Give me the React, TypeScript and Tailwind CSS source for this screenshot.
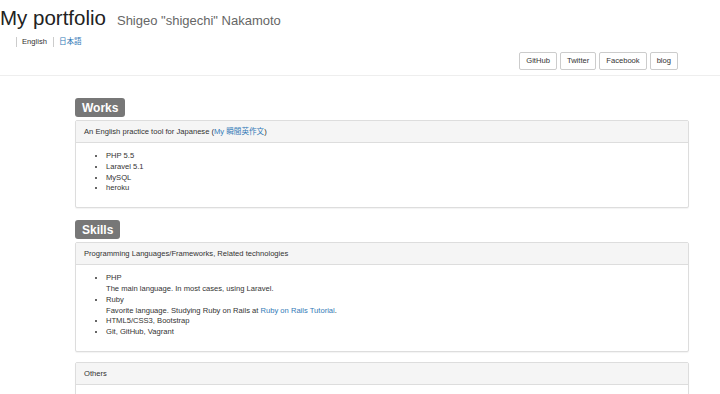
import React from "react";

function Panel({ title, children }: { title: React.ReactNode; children?: React.ReactNode }) {
  return (
    <div className="border border-[#dddddd] rounded-[2px] bg-white shadow-[0_1px_1px_rgba(0,0,0,0.05)]">
      <div className="bg-[#f5f5f5] border-b border-[#dddddd] h-[22px] px-[8px] flex items-center leading-[11px]">
        {title}
      </div>
      {children}
    </div>
  );
}

function Label({ children }: { children: React.ReactNode }) {
  return (
    <div className="inline-flex items-center h-[19px] px-[7px] bg-[#777777] rounded-[3px] text-white font-bold text-[12px] leading-none">
      {children}
    </div>
  );
}

export default function App() {
  const link = "text-[#337ab7]";
  return (
    <div
      className="w-[720px] h-[394px] overflow-hidden bg-white text-[#333333] text-[7.6px] leading-[10.8px]"
      style={{ fontFamily: '"Liberation Sans", Arial, "Noto Sans CJK JP", sans-serif' }}
    >
      <header className="border-b border-[#eeeeee] h-[76px] relative">
        <div className="flex items-baseline pt-[6px]">
          <h1 className="text-[20.5px] leading-[23px] font-normal text-[#222222] m-0">My portfolio</h1>
          <span className="ml-[11px] text-[13px] text-[#666666]">Shigeo "shigechi" Nakamoto</span>
        </div>
        <div className="flex items-center mt-[8px] ml-[16px]">
          <span className="border-l border-[#cccccc] pl-[5px] pr-[6px] leading-[10px]">English</span>
          <span className={`border-l border-[#cccccc] pl-[5px] leading-[10px] ${link}`}>日本語</span>
        </div>
        <div className="flex justify-end gap-[3px] mr-[42px] mt-[5px]">
          {["GitHub", "Twitter", "Facebook", "blog"].map((b) => (
            <span
              key={b}
              className="h-[18px] px-[6px] flex items-center border border-[#cccccc] rounded-[2px] bg-white text-[#333333]"
            >
              {b}
            </span>
          ))}
        </div>
      </header>

      <main className="ml-[75px] w-[614px] pt-[22px]">
        <Label>Works</Label>
        <div className="mt-[3px]">
          <Panel
            title={
              <span>
                An English practice tool for Japanese (<span className={link}>My 瞬間英作文</span>)
              </span>
            }
          >
            <div className="px-[8px] pt-[8px] pb-[8px]">
              <ul className="list-disc pl-[22px] mb-[5px]">
                <li>PHP 5.5</li>
                <li>Laravel 5.1</li>
                <li>MySQL</li>
                <li>heroku</li>
              </ul>
            </div>
          </Panel>
        </div>

        <div className="mt-[12px]">
          <Label>Skills</Label>
        </div>
        <div className="mt-[3px]">
          <Panel title="Programming Languages/Frameworks, Related technologies">
            <div className="px-[8px] pt-[8px] pb-[8px]">
              <ul className="list-disc pl-[22px] mb-[5px]">
                <li>
                  PHP
                  <br />
                  The main language. In most cases, using Laravel.
                </li>
                <li>
                  Ruby
                  <br />
                  Favorite language. Studying Ruby on Rails at <span className={link}>Ruby on Rails Tutorial</span>.
                </li>
                <li>HTML5/CSS3, Bootstrap</li>
                <li>Git, GitHub, Vagrant</li>
              </ul>
            </div>
          </Panel>
        </div>

        <div className="mt-[10px]">
          <Panel title="Others">
            <div className="h-[40px]" />
          </Panel>
        </div>
      </main>
    </div>
  );
}
